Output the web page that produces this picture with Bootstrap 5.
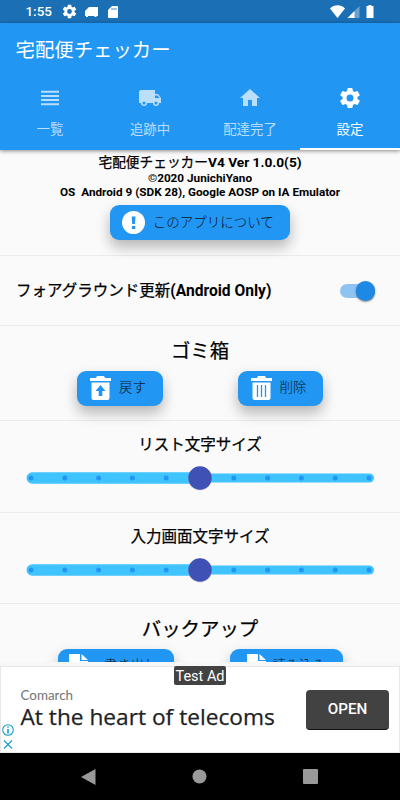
<!DOCTYPE html>
<html lang="ja">
<head>
<meta charset="utf-8">
<meta name="viewport" content="width=device-width, initial-scale=1">
<title>宅配便チェッカー</title>
<link href="https://cdn.jsdelivr.net/npm/bootstrap@5.3.0/dist/css/bootstrap.min.css" rel="stylesheet">
<style>
body{font-family:Roboto,"Noto Sans CJK JP",sans-serif;background:#fafafa;color:#000;width:400px;height:800px;line-height:1;overflow:hidden}
svg{display:block;flex:none}
.statusbar{height:23px;background:#1a6fb5;color:#fff;font-size:13.4px;font-weight:500;padding-left:25.5px;padding-right:25px}
.appbar{height:127px;background:#2196f3;color:#fff;box-shadow:0 1px 4px rgba(0,0,0,.45);z-index:2;position:relative}
.app-title{height:56px;font-size:19.4px;padding-left:15.5px;margin-bottom:-1px}
.tab-item{height:72px;padding:8px 0 0;color:#bbdefb;font-size:13.4px;border-radius:0;line-height:1}
.tab-item.active{color:#fff;border-bottom:2px solid #fff}
.tab-item span{margin-top:11px;line-height:18px}
.main-area{height:512px;overflow:hidden}
.sect{border-bottom:1px solid #ececec}
.jp{font-weight:400;-webkit-text-stroke:.25px #000}
.about{height:106px;padding-top:4px}
.l1{font-size:13.7px;height:18px;line-height:16px}
.l2{font-size:11.75px;height:13.5px;line-height:13px}
.fill-btn{background:#2196f3!important;border:0;border-radius:9px;height:35px;color:#0a1420!important;font-size:13.4px;font-weight:300;padding:0;line-height:1;box-shadow:0 7px 14px rgba(0,0,0,.28)}
.update{height:70px;font-size:15.6px;padding:3px 25px 0 16px}
.update .jp{font-size:15.5px}
.toggle{width:35px;height:14px;border-radius:7px;background:#8ec3f2;padding:0;margin-top:-2px}
.knob{width:19.5px;height:19.5px;flex:none;border-radius:50%;background:#1e88e5;box-shadow:0 1px 2px rgba(0,0,0,.45)}
.trash{height:95px}
.big{font-size:19.4px;line-height:24px}
.mid{font-size:15.5px;line-height:20px}
.slide-sect{padding-top:14px}
.slider{width:348px;margin-top:9.400px}
.adstrip{height:91px;background:#fff;border-top:4px solid #f7f7f7;position:relative}
.ad-inner{border:1px solid #e8e8e8;height:87px;padding:0 10px 0 19.500px}
.test-ad{position:absolute;left:174px;top:0;width:52px;height:19px;background:#424242;border-radius:2px;color:#fff;font-size:14.5px;line-height:21px;white-space:nowrap}
.ad-marks{position:absolute;left:2px;top:58px}
.ad-brand{font:13.4px/18px Lato,sans-serif;color:#70757a;margin-top:-3px}
.ad-head{font:22.7px/26px "Open Sans",sans-serif;color:#202124;-webkit-text-stroke:.25px #202124;white-space:nowrap}
.open-btn{width:83px;height:40px;background:#424242!important;color:#fff!important;border:0;border-bottom:1px solid #111;border-radius:4px;padding:2px 0 0;font-size:15.2px;font-weight:500;line-height:1}
.sysnav{height:47px;background:#000}
</style>
<script src="https://cdn.jsdelivr.net/npm/bootstrap@5.3.0/dist/js/bootstrap.bundle.min.js"></script>
</head>
<body class="d-flex flex-column">
<div class="statusbar d-flex align-items-center">
  <span>1:55</span>
  <svg style="margin-left:10px" width="15" height="15" viewBox="1 1 22 22" fill="#fff"><path fill-rule="evenodd" d="M19.400 13c0-.3.1-.6.1-1s0-.7-.1-1l2.200-1.600c.2-.2.2-.4.1-.6l-2-3.500c-.1-.2-.4-.3-.6-.2l-2.500 1c-.5-.4-1.100-.7-1.700-1l-.4-2.600c0-.3-.2-.5-.5-.5h-4c-.3 0-.5.2-.5.5l-.4 2.600c-.6.3-1.200.6-1.700 1l-2.500-1c-.2-.1-.5 0-.6.2l-2 3.500c-.1.2-.1.5.1.6l2.200 1.600v2l-2.200 1.600c-.2.2-.2.4-.1.6l2 3.500c.1.2.4.3.6.2l2.500-1c.5.4 1.100.7 1.700 1l.4 2.600c0 .3.2.5.5.5h4c.3 0 .5-.2.5-.5l.4-2.600c.6-.3 1.200-.6 1.700-1l2.500 1c.2.1.5 0 .6-.2l2-3.500c.1-.2.1-.5-.1-.6zM12 15.500a3.500 3.500 0 1 1 0-7 3.500 3.500 0 0 1 0 7z"/></svg>
  <svg style="margin-left:7px" width="15" height="12" viewBox="0 0 15 12" fill="#fff"><path d="M5 1h9v9h-1.500v1h-2v-1H4v1H2v-1H1V5z"/></svg>
  <svg style="margin-left:8px" width="12" height="14" viewBox="0 0 12 14"><path d="M5 1h5q1 0 1 1v10q0 1-1 1H2q-1 0-1-1V5z" fill="#fff"/><path d="M5 3v2M7 3v2M9 3v2" stroke="#1a6fb5" stroke-width=".8"/></svg>
  <svg class="ms-auto" width="46" height="15" viewBox="0 0 46 15"><path d="M1 4.500C5 .3 12 .3 16 4.500L8.500 14z" fill="#fff"/><path d="M30.500 2v12H18.500z" fill="#fff" opacity=".35"/><path d="M25.500 7v7h-7z" fill="#fff"/><path d="M39.500 2V1h3v1h2v12h-7V2z" fill="#fff"/></svg>
</div>
<header class="appbar">
  <div class="app-title d-flex align-items-center">宅配便チェッカー</div>
  <nav class="nav nav-fill">
    <a class="nav-link tab-item col-3 d-flex flex-column align-items-center"><svg width="24" height="24" viewBox="0 0 24 24"><path d="M3 5.700h18M3 10h18M3 14h18M3 18.300h18" stroke="currentColor" stroke-width="2.100"/></svg><span>一覧</span></a>
    <a class="nav-link tab-item col-3 d-flex flex-column align-items-center"><svg width="24" height="24" viewBox="0 0 24 24" fill="currentColor"><path d="M20 8h-3V4H3c-1.100 0-2 .9-2 2v11h2a3 3 0 0 0 6 0h6a3 3 0 0 0 6 0h2v-5zM6 18.500a1.500 1.500 0 1 1 0-3 1.500 1.500 0 0 1 0 3zm13.500-9 2 2.500H17V9.500zm-1.500 9a1.500 1.500 0 1 1 0-3 1.500 1.500 0 0 1 0 3z"/></svg><span>追跡中</span></a>
    <a class="nav-link tab-item col-3 d-flex flex-column align-items-center"><svg width="24" height="24" viewBox="0 0 24 24" fill="currentColor"><path d="M10 20v-6h4v6h5v-8h3L12 3 2 12h3v8z"/></svg><span>配達完了</span></a>
    <a class="nav-link tab-item active col-3 d-flex flex-column align-items-center"><svg width="24" height="24" viewBox="0 0 24 24" fill="currentColor"><path fill-rule="evenodd" d="M19.400 13c0-.3.1-.6.1-1s0-.7-.1-1l2.200-1.600c.2-.2.2-.4.1-.6l-2-3.500c-.1-.2-.4-.3-.6-.2l-2.500 1c-.5-.4-1.100-.7-1.700-1l-.4-2.600c0-.3-.2-.5-.5-.5h-4c-.3 0-.5.2-.5.5l-.4 2.600c-.6.3-1.200.6-1.700 1l-2.500-1c-.2-.1-.5 0-.6.2l-2 3.500c-.1.2-.1.5.1.6l2.200 1.600v2l-2.200 1.600c-.2.2-.2.4-.1.6l2 3.500c.1.2.4.3.6.2l2.500-1c.5.4 1.100.7 1.700 1l.4 2.600c0 .3.2.5.5.5h4c.3 0 .5-.2.5-.5l.4-2.600c.6-.3 1.200-.6 1.700-1l2.500 1c.2.1.5 0 .6-.2l2-3.500c.1-.2.1-.5-.1-.6zM12 15.500a3.500 3.500 0 1 1 0-7 3.500 3.500 0 0 1 0 7z"/></svg><span>設定</span></a>
  </nav>
</header>
<main class="main-area">
  <section class="sect about d-flex flex-column align-items-center fw-bold">
    <div class="l1"><span class="jp">宅配便チェッカー</span>V4 Ver 1.0.0(5)</div>
    <div class="l2">©2020 JunichiYano</div>
    <div class="l2">OS&nbsp; Android 9 (SDK 28), Google AOSP on IA Emulator</div>
    <button class="btn fill-btn d-flex align-items-center" style="width:180.500px;margin-top:6px;padding-left:12px"><svg width="23" height="23" viewBox="0 0 23 23"><circle cx="11.500" cy="11.500" r="11.500" fill="#fff"/><path d="M9.700 5.500h3.800L13 13h-2.800zM9.900 15h3.400v3H9.900z" fill="#2196f3"/></svg><span style="margin-left:8px;font-size:13.500px">このアプリについて</span></button>
  </section>
  <section class="sect update d-flex align-items-center justify-content-between fw-bold">
    <div><span class="jp">フォアグラウンド更新</span>(Android Only)</div>
    <div class="toggle d-flex align-items-center justify-content-end"><div class="knob"></div></div>
  </section>
  <section class="sect trash text-center">
    <div class="big jp" style="padding-top:14px">ゴミ箱</div>
    <div class="d-flex" style="margin-top:6.500px;padding-left:77px;gap:75px">
      <button class="btn fill-btn d-flex align-items-center" style="width:85.500px;padding-left:13px"><svg width="21" height="24" viewBox="0 0 21 24"><path d="M0 2h6l1-2h7l1 2h6v3H0zM1.500 6.500h18V22q0 2-2 2h-14q-2 0-2-2z" fill="#fff"/><path d="M10.500 9l5 6h-3.200v5H8.700v-5H5.500z" fill="#2196f3"/></svg><span style="margin-left:8px">戻す</span></button>
      <button class="btn fill-btn d-flex align-items-center" style="width:85.500px;padding-left:13px"><svg width="21" height="24" viewBox="0 0 21 24"><path d="M0 2h6l1-2h7l1 2h6v3H0zM1.500 6.500h18V22q0 2-2 2h-14q-2 0-2-2z" fill="#fff"/><path d="M6.500 9v12M10.500 9v12M14.500 9v12" stroke="#2196f3" stroke-width="1.300"/></svg><span style="margin-left:8px">削除</span></button>
    </div>
  </section>
  <section class="sect slide-sect d-flex flex-column align-items-center" style="height:92px">
    <div class="mid jp">リスト文字サイズ</div>
    <svg class="slider" height="28" viewBox="0 0 348 28"><rect x="9" y="9.500" width="339" height="9" rx="4.500" fill="#40c4ff"/><rect x=".5" y="8.300" width="174" height="11.400" rx="5.700" fill="#40c4ff"/><path d="M5 14H343.500" stroke="#2196f3" stroke-width="5" stroke-linecap="round" stroke-dasharray="0 33.800"/><circle cx="174" cy="14.500" r="11.900" fill="#aaa" opacity=".5"/><circle cx="174" cy="14" r="11.700" fill="#3f51b5"/></svg>
  </section>
  <section class="sect slide-sect d-flex flex-column align-items-center" style="height:91px;padding-top:13.500px">
    <div class="mid jp">入力画面文字サイズ</div>
    <svg class="slider" style="margin-top:9px" height="28" viewBox="0 0 348 28"><rect x="9" y="9.500" width="339" height="9" rx="4.500" fill="#40c4ff"/><rect x=".5" y="8.300" width="174" height="11.400" rx="5.700" fill="#40c4ff"/><path d="M5 14H343.500" stroke="#2196f3" stroke-width="5" stroke-linecap="round" stroke-dasharray="0 33.800"/><circle cx="174" cy="14.500" r="11.900" fill="#aaa" opacity=".5"/><circle cx="174" cy="14" r="11.700" fill="#3f51b5"/></svg>
  </section>
  <section class="text-center">
    <div class="big jp" style="padding-top:14px">バックアップ</div>
    <div class="d-flex" style="margin-top:6.500px;padding-left:58px;gap:56px">
      <button class="btn fill-btn d-flex align-items-center" style="width:115.500px;padding-left:11px"><svg width="19" height="24" viewBox="0 0 19 24"><path d="M0 0h11v7h8v17H0zM12.500 0 19 6h-6.500z" fill="#fff"/></svg><span style="margin-left:16px">書き出し</span></button>
      <button class="btn fill-btn d-flex align-items-center" style="width:113px;padding-left:17px"><svg width="19" height="24" viewBox="0 0 19 24"><path d="M0 0h11v7h8v17H0zM12.500 0 19 6h-6.500z" fill="#fff"/></svg><span style="margin-left:7px">読み込み</span></button>
    </div>
  </section>
</main>
<aside class="adstrip">
  <div class="ad-inner d-flex align-items-center justify-content-between">
    <div><div class="ad-brand">Comarch</div><div class="ad-head">At the heart of telecoms</div></div>
    <button class="btn open-btn">OPEN</button>
  </div>
  <div class="test-ad text-center">Test Ad</div>
  <svg class="ad-marks" width="12" height="27" viewBox="0 0 12 27" fill="none" stroke="#18a0c8" stroke-width="1.100"><circle cx="6" cy="6" r="5.300"/><path d="M6 5v4.500M6 2.500v1.300" stroke-width="1.600"/><path d="M2 16.500l8 8M10 16.500l-8 8"/></svg>
</aside>
<footer class="sysnav d-flex align-items-center justify-content-between" style="padding-left:81px;padding-right:82px">
  <svg width="15" height="16" viewBox="0 0 15 16"><path d="M14.500 0v16L0 8z" fill="#999"/></svg>
  <svg width="15" height="15" viewBox="0 0 15 15"><circle cx="7.500" cy="7.500" r="7" fill="#999"/></svg>
  <svg width="15" height="15" viewBox="0 0 15 15"><rect width="15" height="15" rx="1" fill="#999"/></svg>
</footer>
</body>
</html>
